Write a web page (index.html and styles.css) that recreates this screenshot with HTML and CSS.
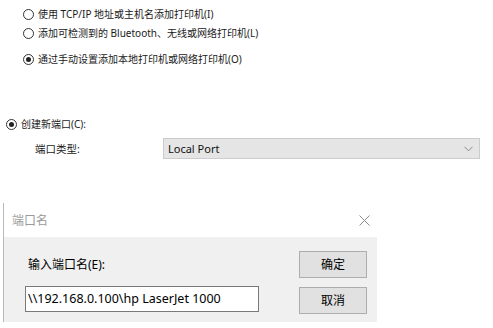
FILE: index.html
```html
<!DOCTYPE html>
<html lang="zh-CN">
<head>
<meta charset="utf-8">
<title>端口名</title>
<link rel="stylesheet" href="styles.css">
</head>
<body>
<div class="options">
  <label class="opt"><span class="radio"></span><span>使用 TCP/IP 地址或主机名添加打印机(I)</span></label>
  <label class="opt"><span class="radio"></span><span>添加可检测到的 Bluetooth、无线或网络打印机(L)</span></label>
  <label class="opt opt-last"><span class="radio checked"></span><span>通过手动设置添加本地打印机或网络打印机(O)</span></label>
</div>
<div class="port">
  <label class="opt"><span class="radio checked"></span><span>创建新端口(C):</span></label>
  <div class="port-type">
    <span class="port-label">端口类型:</span>
    <div class="combo">
      <span>Local Port</span>
      <svg class="chev" width="9" height="6" viewBox="0 0 9 6"><path d="M0.5 0.8 L4.5 4.8 L8.5 0.8" fill="none" stroke="#8a8a8a" stroke-width="1"/></svg>
    </div>
  </div>
</div>
<div class="dialog">
  <div class="titlebar">
    <span class="title">端口名</span>
    <svg class="close" width="11" height="11" viewBox="0 0 11 11"><path d="M0.5 0.5 L10.5 10.5 M10.5 0.5 L0.5 10.5" stroke="#8c8c8c" stroke-width="1" fill="none"/></svg>
  </div>
  <div class="dlg-body">
    <div class="dlg-left">
      <div class="dlg-label">输入端口名(E):</div>
      <div class="input">\\192.168.0.100\hp LaserJet 1000</div>
    </div>
    <div class="dlg-buttons">
      <div class="btn">确定</div>
      <div class="btn">取消</div>
    </div>
  </div>
</div>
</body>
</html>
```
FILE: styles.css
```css
html, body {
  margin: 0;
  padding: 0;
  background: #ffffff;
}
body {
  width: 493px;
  height: 328px;
  overflow: hidden;
  font-family: "Noto Sans", "Noto Sans CJK SC", sans-serif;
  color: #1a1a1a;
  font-size: 10px;
}
.options {
  padding: 6px 0 0 23px;
}
.opt {
  display: flex;
  align-items: center;
  gap: 4px;
  height: 16px;
  line-height: 16px;
  white-space: nowrap;
}
.opt + .opt {
  margin-top: 3px;
}
.opt.opt-last {
  margin-top: 10px;
}
.radio {
  box-sizing: border-box;
  width: 11px;
  height: 11px;
  border: 1px solid #333333;
  border-radius: 50%;
  background: #ffffff;
  position: relative;
  flex: none;
}
.radio.checked::after {
  content: "";
  position: absolute;
  left: 2px;
  top: 2px;
  width: 5px;
  height: 5px;
  border-radius: 50%;
  background: #222222;
}
.port {
  margin-top: 49px;
  padding-left: 6px;
}
.port-type {
  display: flex;
  align-items: center;
  margin-top: 6px;
  padding-left: 29px;
}
.port-label {
  width: 128px;
  font-size: 10.5px;
}
.combo {
  box-sizing: border-box;
  width: 317px;
  height: 21px;
  background: #e5e5e5;
  border: 1px solid #cccccc;
  display: flex;
  align-items: center;
  justify-content: space-between;
  padding: 0 6px 0 4px;
  font-size: 11px;
  color: #111;
}
.dialog {
  margin-top: 44px;
  margin-left: 3px;
  width: 373px;
  border-left: 1px solid #b9b9b9;
}
.titlebar {
  height: 34px;
  display: flex;
  align-items: center;
  justify-content: space-between;
  padding: 0 7px 0 8px;
  background: #ffffff;
}
.title {
  font-size: 12px;
  color: #9a9a9a;
}
.dlg-body {
  box-sizing: border-box;
  height: 85px;
  background: #f0f0f0;
  display: flex;
  padding: 14px 0 0 21px;
}
.dlg-left {
  width: 234px;
  padding-top: 7px;
}
.dlg-label {
  font-size: 12px;
  line-height: 14px;
  padding-left: 3px;
  color: #000;
}
.input {
  box-sizing: border-box;
  margin-top: 14px;
  width: 234px;
  height: 26px;
  border: 1px solid #7a7a7a;
  background: #ffffff;
  font-size: 12.5px;
  line-height: 24px;
  padding-left: 2px;
  color: #000;
  white-space: nowrap;
}
.dlg-buttons {
  margin-left: 40px;
  display: flex;
  flex-direction: column;
  gap: 9px;
}
.btn {
  box-sizing: border-box;
  width: 68px;
  height: 27px;
  background: #e1e1e1;
  border: 1px solid #adadad;
  font-size: 12px;
  line-height: 25px;
  text-align: center;
  color: #000;
}
```
